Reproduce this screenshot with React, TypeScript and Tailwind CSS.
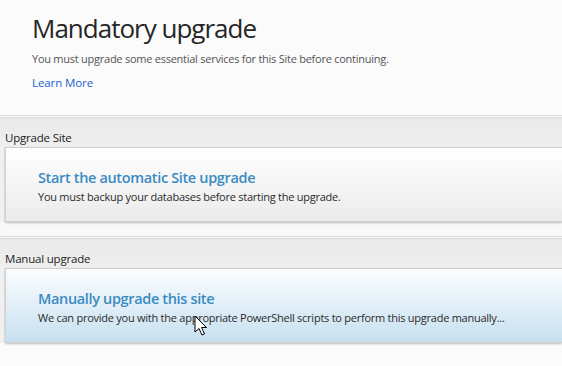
const font = { fontFamily: '"Open Sans", "Noto Sans", sans-serif' };

type CardProps = {
  label: string;
  title: string;
  text: string;
  tone: "gray" | "blue";
  cursor?: boolean;
};

const UpgradeCard = ({ label, title, text, tone, cursor }: CardProps) => {
  return (
    <div>
      <div className="h-[3px] border-t border-b border-[#d6d6d6] bg-white" />
      <div className="bg-gradient-to-b from-[#e9e9e9] to-[#efefef] h-[29px] flex items-end pb-[4px] pl-[5px]">
        <span className="text-[11.5px] text-[#222] leading-none tracking-[-0.2px]">{label}</span>
      </div>
      <div className="bg-[#f0f0f0] pl-[5px]">
        <div
          className={
            "relative h-[75px] border border-r-0 border-[#cfcfcf] shadow-[0_1px_2px_rgba(0,0,0,0.25)] pl-[32px] pt-[19px] " +
            (tone === "blue"
              ? "bg-gradient-to-b from-[#fbfdfe] to-[#c7e0f0]"
              : "bg-gradient-to-b from-[#ffffff] to-[#ebebeb]")
          }
        >
          <div className="text-[14.5px] font-semibold text-[#3a8bc2] leading-[21px] tracking-[-0.35px]">{title}</div>
          <div className="text-[11px] text-[#2b2b2b] leading-[17px] tracking-[-0.25px]">{text}</div>
          {cursor && (
            <svg className="absolute left-[188px] top-[46px]" width="14" height="22" viewBox="0 0 14 22">
              <path d="M1 1 L1 17 L5 13.5 L8 20 L10.5 19 L7.5 12.5 L12.5 12.5 Z" fill="#fff" stroke="#000" strokeWidth="1" strokeLinejoin="round" />
            </svg>
          )}
        </div>
      </div>
    </div>
  );
};

export default function App() {
  return (
    <div className="w-[562px] h-[366px] overflow-hidden bg-[#fbfbfb]" style={font}>
      <div className="h-[115px] pl-[32px] pt-[10px]">
        <h1 className="text-[26px] font-medium leading-[36px] text-[#262626] tracking-[-1px]">Mandatory upgrade</h1>
        <p className="mt-[5px] text-[11px] text-[#555] leading-[16px] tracking-[-0.25px]">
          You must upgrade some essential services for this Site before continuing.
        </p>
        <a className="block mt-[8px] text-[11.5px] text-[#1a5fcf] leading-[16px] tracking-[-0.1px]">Learn More</a>
      </div>
      <UpgradeCard
        label="Upgrade Site"
        title="Start the automatic Site upgrade"
        text="You must backup your databases before starting the upgrade."
        tone="gray"
      />
      <div className="h-[14px] bg-[#f8f8f8]" />
      <UpgradeCard
        label="Manual upgrade"
        title="Manually upgrade this site"
        text="We can provide you with the appropriate PowerShell scripts to perform this upgrade manually..."
        tone="blue"
        cursor
      />
    </div>
  );
}
